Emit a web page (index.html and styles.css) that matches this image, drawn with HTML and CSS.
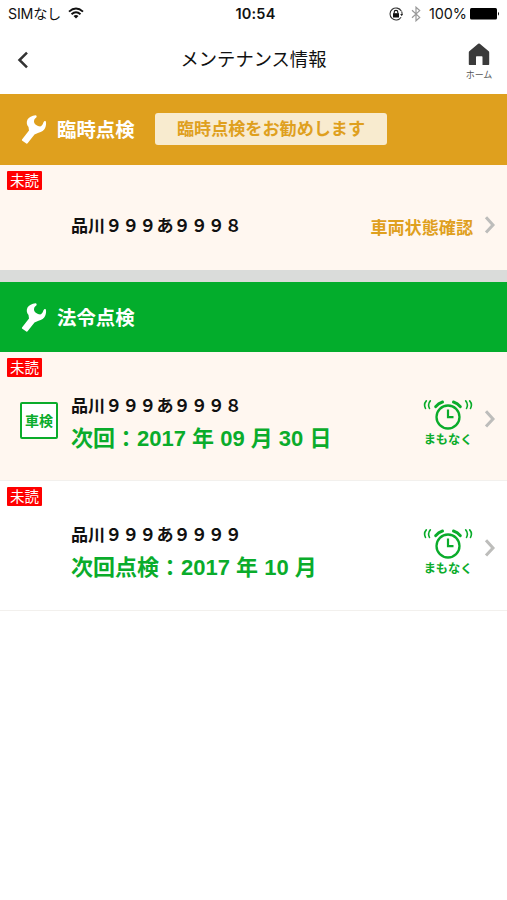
FILE: index.html
```html
<!DOCTYPE html>
<html lang="ja">
<head>
<meta charset="utf-8">
<title>メンテナンス情報</title>
<link rel="stylesheet" href="styles.css">
</head>
<body>
<svg class="defs" aria-hidden="true">
  <symbol id="wrench" viewBox="0 0 26 30">
    <path d="M14.500 1.200C11 1.700 7.800 3 6.500 5.500C5.300 8 5.500 10.500 7.500 13L8 16.500L1 25.500Q.6 26.200 1.300 26.700L5.300 29.500Q6 30 6.600 29.300L13.500 20.600L17.500 18.800C20.500 18.200 23.300 16.500 24.200 13.800C25 11.500 25.400 9 24.800 7.400C24 6.500 22.900 7.300 22.300 8.700C21.500 11 20.300 12.900 18 12.300C15.500 11.700 12.800 9.500 13 7.200C13 5.200 14.500 4.300 15.500 3.300C16 2.200 15.500 1.100 14.500 1.200Z" fill="#fff"/>
  </symbol>
  <symbol id="chevron" viewBox="0 0 12 20">
    <path d="M2 2.200L9 9.900L2 17.600" fill="none" stroke="#bdbdbb" stroke-width="3"/>
  </symbol>
  <symbol id="alarm" viewBox="0 0 50 34">
    <g fill="none" stroke="#0aac2b" stroke-linecap="round">
      <circle cx="25" cy="19" r="11.500" stroke-width="2.300"/>
      <path d="M25 11.500V19.200H30.500" stroke-width="2.200" stroke-linecap="butt"/>
      <path d="M12.700 8.700Q15.500 5 19.500 4M30.500 4Q34.500 5 37.300 8.700" stroke-width="3"/>
      <path d="M3.300 2.900Q.3 6.300 2.500 10.500M7.300 2.900Q4.300 6.200 6.500 10.500M42.700 2.900Q45.700 6.200 43.500 10.500M46.700 2.900Q49.700 6.300 47.500 10.500" stroke-width="1.600"/>
    </g>
  </symbol>
</svg>

<div class="status">
  <div class="carrier"><span>SIMなし</span>
    <svg class="wifi" viewBox="0 0 16 12"><path d="M1 4.600Q8-1.800 15 4.600M3.500 7.200Q8 3.200 12.500 7.200" fill="none" stroke="#111" stroke-width="1.900"/><path d="M5.500 9Q8 7.100 10.500 9L8 11.600Z" fill="#111"/></svg>
  </div>
  <span class="clock">10:54</span>
  <div class="indicators">
    <svg class="lock" viewBox="0 0 14 14"><path d="M12.300 4.100A6 6 0 1 0 12.100 10.200M12.600 4.400A6 6 0 0 1 13 7.500" fill="none" stroke="#333" stroke-width="1.100"/><path d="M11.200 7H14L12.700 9.200Z" fill="#222"/><rect x="4" y="6.200" width="6" height="4.300" fill="#111"/><path d="M5.200 6.500V5Q5.200 3.400 7 3.400T8.800 5V6.500" fill="none" stroke="#111" stroke-width="1.100"/></svg>
    <svg class="bluetooth" viewBox="0 0 10 16"><path d="M1 4.300L8.700 11.400L5 14.800V1.200L8.700 4.600L1 11.700" fill="none" stroke="#999" stroke-width="1.200"/></svg>
    <span class="percent">100%</span>
    <svg class="battery" viewBox="0 0 30 12"><rect width="27" height="11.500" rx="1.500"/><path d="M28 3.800Q30 5.700 28 7.800Z"/></svg>
  </div>
</div>

<header class="nav">
  <svg class="back" viewBox="0 0 12 18"><path d="M10 1.700L2.500 9L10 16.300" fill="none" stroke="#333" stroke-width="2.500"/></svg>
  <h1>メンテナンス情報</h1>
  <div class="home">
    <svg viewBox="0 0 22 23"><path d="M10.200 .7Q11 .1 11.800 .7L20.700 8.300Q21.200 8.800 21.200 9.500V21.300Q21.200 22 20.500 22H14.500V14Q14.500 13.300 13.800 13.300H8.700Q8 13.300 8 14V22H1.500Q.8 22 .8 21.300V9.500Q.8 8.800 1.300 8.300Z" fill="#3b3b3b"/></svg>
    <span>ホーム</span>
  </div>
</header>

<section>
  <div class="heading extra">
    <svg class="wrench"><use href="#wrench"/></svg>
    <h2>臨時点検</h2>
    <span class="advice">臨時点検をお勧めします</span>
  </div>
  <div class="row short tinted">
    <span class="unread">未読</span>
    <div class="body">
      <div class="mark"></div>
      <div class="info"><p class="plate">品川９９９あ９９９８</p></div>
      <span class="check">車両状態確認</span>
      <svg class="chevron"><use href="#chevron"/></svg>
    </div>
  </div>
</section>

<section class="legal-section">
  <div class="heading legal">
    <svg class="wrench"><use href="#wrench"/></svg>
    <h2>法令点検</h2>
  </div>
  <div class="row tinted">
    <span class="unread">未読</span>
    <div class="body">
      <div class="mark"><span class="shaken">車検</span></div>
      <div class="info"><p class="plate">品川９９９あ９９９８</p><p class="next">次回：2017 年 09 月 30 日</p></div>
      <div class="soon"><svg><use href="#alarm"/></svg><span>まもなく</span></div>
      <svg class="chevron"><use href="#chevron"/></svg>
    </div>
  </div>
  <div class="row">
    <span class="unread">未読</span>
    <div class="body">
      <div class="mark"></div>
      <div class="info"><p class="plate">品川９９９あ９９９９</p><p class="next">次回点検：2017 年 10 月</p></div>
      <div class="soon"><svg><use href="#alarm"/></svg><span>まもなく</span></div>
      <svg class="chevron"><use href="#chevron"/></svg>
    </div>
  </div>
</section>
</body>
</html>
```
FILE: styles.css
```css
* { box-sizing: border-box; margin: 0; padding: 0; }
body {
  width: 507px;
  height: 900px;
  overflow: hidden;
  background: #fff;
  color: #111;
  font-family: "Liberation Sans", "Noto Sans CJK JP", sans-serif;
  white-space: nowrap;
}
svg { display: block; flex: none; }
.defs { width: 0; height: 0; position: absolute; }

.status {
  display: grid;
  grid-template-columns: 1fr auto 1fr;
  align-items: center;
  height: 28px;
  padding: 0 7px 0 8px;
  font: 15px/28px Inter, "Noto Sans CJK JP", sans-serif;
}
.carrier { display: flex; align-items: center; gap: 6px; font-size: 14.2px; }
.carrier span { width: 54px; letter-spacing: -.2px; }
.wifi { width: 16px; height: 12px; margin-top: -3px; }
.clock { font-size: 14.5px; font-weight: 600; letter-spacing: .2px; padding-left: 3px; }
.indicators { display: flex; align-items: center; justify-content: flex-end; }
.lock { width: 14px; height: 14px; margin-right: 8px; }
.bluetooth { width: 10px; height: 16px; margin-right: 8px; }
.percent { width: 37px; margin-right: 4px; font-size: 14.4px; letter-spacing: -.1px; }
.battery { width: 30px; height: 12px; }

.nav {
  display: grid;
  grid-template-columns: 60px 1fr 60px;
  align-items: center;
  height: 66px;
}
.back { width: 12px; height: 18px; margin: -2px 0 0 17px; }
.nav h1 { font-size: 18.3px; font-weight: 400; line-height: 28px; text-align: center; margin-top: -2px; }
.home { display: flex; flex-direction: column; align-items: center; padding-left: 4px; margin-top: 2px; }
.home svg { width: 22px; height: 23px; }
.home span { font-size: 9px; line-height: 12px; color: #555; margin-top: 3px; }

.heading { display: flex; align-items: center; height: 70.500px; padding-left: 21px; color: #fff; }
.extra { background: #dfa01e; }
.legal { background: #03ad2c; }
.wrench { width: 26px; height: 30px; }
.heading h2 { width: 98px; margin-left: 10px; padding-top: 2px; font-size: 19.4px; line-height: 30px; }
.advice {
  width: 232px;
  height: 32px;
  border-radius: 3px;
  background: #f8ebcf;
  color: #dfa01e;
  font-size: 17.100px;
  font-weight: 700;
  line-height: 34px;
  text-align: center;
}

.row { height: 129.300px; padding-top: 6px; border-bottom: 1px solid #f2f0ed; }
.short { height: 105px; border: 0; }
.tinted { background: #fff7f0; }
.unread {
  display: block;
  width: 35px;
  height: 19px;
  margin-left: 7px;
  border-radius: 1px;
  background: #f00;
  color: #fff;
  font-size: 14.5px;
  line-height: 20px;
  text-align: center;
}
.body { display: flex; align-items: center; height: 84px; padding-right: 11px; }
.short .body { height: 70px; }
.mark { width: 71px; padding-left: 20px; }
.shaken {
  display: block;
  width: 38px;
  height: 37px;
  margin-top: 3px;
  border: 2.500px solid #0aac2b;
  border-radius: 2px;
  background: #fff;
  color: #0aac2b;
  font-size: 14px;
  font-weight: 700;
  line-height: 35px;
  text-align: center;
}
.info { flex: 1; padding-top: 9px; }
.short .info { padding-top: 4px; }
.plate { font-size: 17.100px; font-weight: 700; line-height: 30px; }
.next { color: #0aac2b; font-size: 22px; font-weight: 700; line-height: 34px; }
.check { color: #dfa01e; font-size: 17.100px; font-weight: 700; margin: 3px 11px 0 0; }
.chevron { width: 12px; height: 20px; }
.soon { display: flex; flex-direction: column; align-items: center; width: 50px; margin: 6px 11px 0 0; }
.soon svg { width: 50px; height: 34px; }
.soon span { color: #0aac2b; font-size: 12.200px; font-weight: 700; line-height: 14px; margin-top: 1px; }

.legal-section { border-top: 12.500px solid #dadcda; }
```
